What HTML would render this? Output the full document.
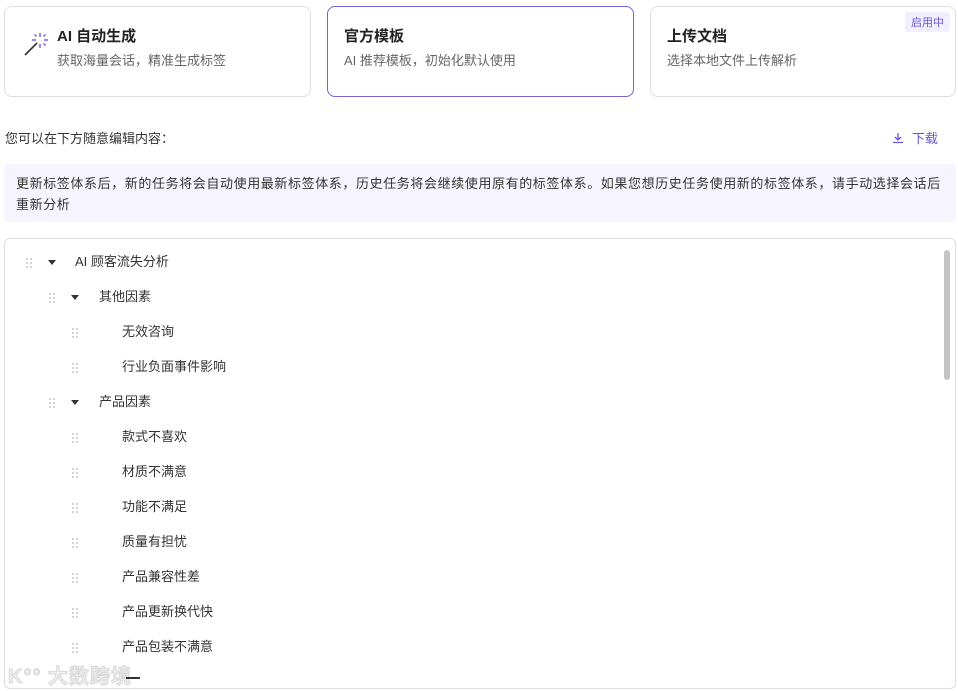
<!DOCTYPE html><html><head><meta charset="utf-8"><style>
*{box-sizing:border-box;margin:0;padding:0}
body{width:958px;height:691px;background:#fff;font-family:"Liberation Sans","Noto Sans CJK SC",sans-serif;position:relative;overflow:hidden;color:#333}
.card{position:absolute;top:6px;height:91px;border:1px solid #dedede;border-radius:8px;width:307px}
.card .t{position:absolute;left:16px;top:18px;font-size:15px;font-weight:bold;color:#222}
.card .s{position:absolute;left:16px;top:43px;font-size:13px;color:#666}
.tag{position:absolute;right:5px;top:5px;background:#f1effd;color:#6a55d8;font-size:11px;padding:2px 6px;border-radius:3px}
.row{position:absolute;font-size:13px;color:#333;height:20px;line-height:20px}
.dots{position:absolute;width:7px;height:11px;background-image:radial-gradient(circle,#c8c8c8 0.9px,transparent 1.1px);background-size:4px 4px}
.tri{position:absolute;width:0;height:0;border-left:4px solid transparent;border-right:4px solid transparent;border-top:5px solid #333}
</style></head><body>
<div class="card" style="left:4px">
<svg style="position:absolute;left:18px;top:20px" width="30" height="30" viewBox="0 0 30 30"><line x1="2" y1="28" x2="14" y2="16" stroke="#333" stroke-width="1.6"/><g stroke="#7b61e0" stroke-width="1.5"><line x1="17" y1="6" x2="17" y2="10"/><line x1="17" y1="17" x2="17" y2="21"/><line x1="9" y1="13" x2="13" y2="13"/><line x1="21" y1="13" x2="25" y2="13"/><line x1="11.5" y1="7.5" x2="13.5" y2="9.5"/><line x1="22.5" y1="7.5" x2="20.5" y2="9.5"/><line x1="22.5" y1="18.5" x2="20.5" y2="16.5"/></g></svg>
<div class="t" style="left:52px">AI 自动生成</div><div class="s" style="left:52px">获取海量会话，精准生成标签</div></div>
<div class="card" style="left:327px;border-color:#7461dc"><div class="t">官方模板</div><div class="s">AI 推荐模板，初始化默认使用</div></div>
<div class="card" style="left:650px;width:306px"><div class="tag">启用中</div><div class="t">上传文档</div><div class="s">选择本地文件上传解析</div></div>
<div style="position:absolute;left:5px;top:128px;font-size:13px;color:#333">您可以在下方随意编辑内容：</div>
<div style="position:absolute;left:892px;top:128px;font-size:13px;color:#6a55d8"><svg width="12" height="12" viewBox="0 0 12 12" style="vertical-align:-1px;margin-right:8px"><path d="M6 1v7M3 5l3 3 3-3M1 10.5h10" stroke="#6a55d8" stroke-width="1.3" fill="none"/></svg>下载</div>
<div style="position:absolute;left:4px;top:164px;width:952px;height:58px;background:#f6f4fe;border-radius:4px;padding:9px 0 9px 12px;font-size:13px;line-height:21px;color:#333;letter-spacing:0.6px;white-space:nowrap">更新标签体系后，新的任务将会自动使用最新标签体系，历史任务将会继续使用原有的标签体系。如果您想历史任务使用新的标签体系，请手动选择会话后<br>重新分析</div>
<div style="position:absolute;left:4px;top:238px;width:952px;height:451px;border:1px solid #dedede;border-radius:6px;overflow:hidden">
<div style="position:absolute;right:5px;top:11px;width:6px;height:130px;background:#c4c4c4;border-radius:3px"></div>
</div>
<div class="dots" style="left:25px;top:257px"></div><div class="tri" style="left:48px;top:260px"></div><div class="row" style="left:75px;top:252px">AI 顾客流失分析</div>
<div class="dots" style="left:48px;top:292px"></div><div class="tri" style="left:71px;top:295px"></div><div class="row" style="left:99px;top:287px">其他因素</div>
<div class="dots" style="left:71px;top:327px"></div><div class="row" style="left:122px;top:322px">无效咨询</div>
<div class="dots" style="left:71px;top:362px"></div><div class="row" style="left:122px;top:357px">行业负面事件影响</div>
<div class="dots" style="left:48px;top:397px"></div><div class="tri" style="left:71px;top:400px"></div><div class="row" style="left:99px;top:392px">产品因素</div>
<div class="dots" style="left:71px;top:432px"></div><div class="row" style="left:122px;top:427px">款式不喜欢</div>
<div class="dots" style="left:71px;top:467px"></div><div class="row" style="left:122px;top:462px">材质不满意</div>
<div class="dots" style="left:71px;top:502px"></div><div class="row" style="left:122px;top:497px">功能不满足</div>
<div class="dots" style="left:71px;top:537px"></div><div class="row" style="left:122px;top:532px">质量有担忧</div>
<div class="dots" style="left:71px;top:572px"></div><div class="row" style="left:122px;top:567px">产品兼容性差</div>
<div class="dots" style="left:71px;top:607px"></div><div class="row" style="left:122px;top:602px">产品更新换代快</div>
<div class="dots" style="left:71px;top:642px"></div><div class="row" style="left:122px;top:637px">产品包装不满意</div>
<div style="position:absolute;left:8px;top:660px;font-size:20px;color:#efefef;font-weight:bold;letter-spacing:1px;-webkit-text-stroke:1px #d8d8d8">K°° 大数跨境</div>
<div style="position:absolute;left:126px;top:677px;width:14px;height:1.5px;background:#333"></div>
</body></html>
